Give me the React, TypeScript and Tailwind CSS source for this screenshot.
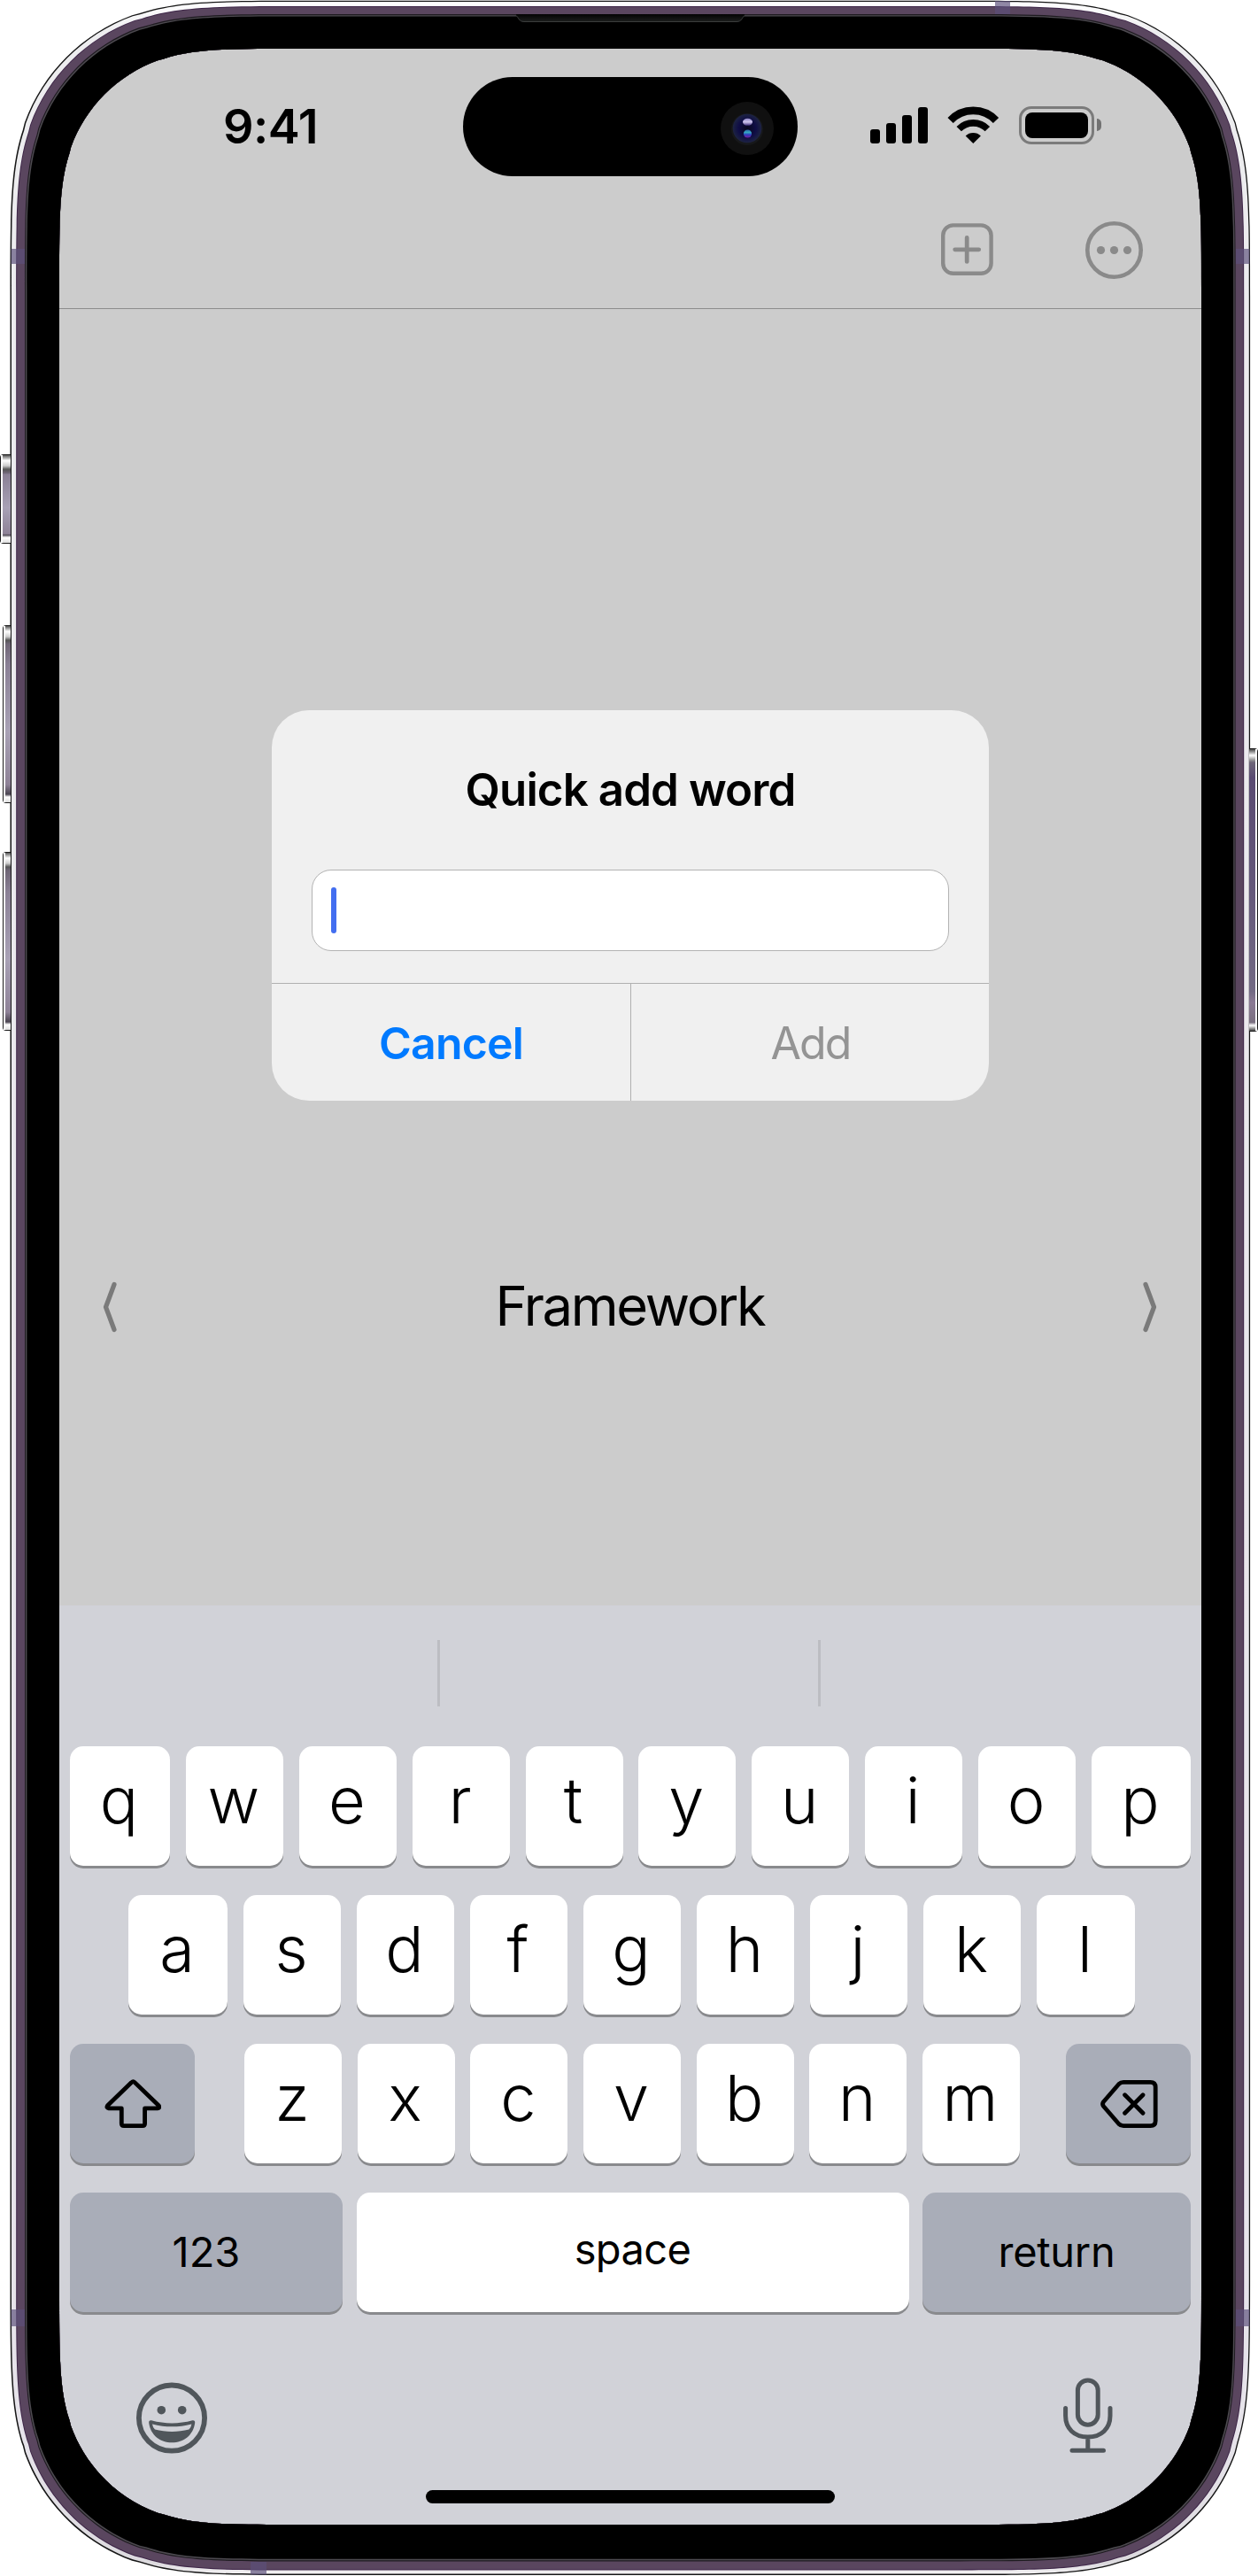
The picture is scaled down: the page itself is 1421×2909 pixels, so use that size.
import React from "react";

/** Rounded rectangle with continuous (smoothed) corners. */
function squircle(x: number, y: number, w: number, h: number, r: number) {
  const a = 1.52866483 * r, b = 1.08849323 * r, c = 0.86840694 * r, d = 0.66993427 * r, e = 0.065496 * r;
  const f = 0.63149399 * r, g = 0.07491139 * r, i = 0.37282392 * r, j = 0.16905956 * r;
  const R = x + w, B = y + h;
  return [
    `M${x + a} ${y}H${R - a}`,
    `C${R - b} ${y} ${R - c} ${y} ${R - d} ${y + e}L${R - f} ${y + g}`,
    `C${R - i} ${y + j} ${R - j} ${y + i} ${R - g} ${y + f}`,
    `L${R - e} ${y + d}C${R} ${y + c} ${R} ${y + b} ${R} ${y + a}V${B - a}`,
    `C${R} ${B - b} ${R} ${B - c} ${R - e} ${B - d}L${R - g} ${B - f}`,
    `C${R - j} ${B - i} ${R - i} ${B - j} ${R - f} ${B - g}`,
    `L${R - d} ${B - e}C${R - c} ${B} ${R - b} ${B} ${R - a} ${B}H${x + a}`,
    `C${x + b} ${B} ${x + c} ${B} ${x + d} ${B - e}L${x + f} ${B - g}`,
    `C${x + i} ${B - j} ${x + j} ${B - i} ${x + g} ${B - f}`,
    `L${x + e} ${B - d}C${x} ${B - c} ${x} ${B - b} ${x} ${B - a}V${y + a}`,
    `C${x} ${y + b} ${x} ${y + c} ${x + e} ${y + d}L${x + g} ${y + f}`,
    `C${x + j} ${y + i} ${x + i} ${y + j} ${x + f} ${y + g}`,
    `L${x + d} ${y + e}C${x + c} ${y} ${x + b} ${y} ${x + a} ${y}Z`,
  ].join("");
}

const HOLE = squircle(67, 55, 1290, 2796, 176);

function ring(x: number, y: number, w: number, h: number, r: number) {
  return squircle(x, y, w, h, r) + HOLE;
}

function Shell() {
  return (
    <svg className="pointer-events-none absolute inset-0" width="1421" height="2909" viewBox="0 0 1421 2909">
      <defs>
        <linearGradient id="rim" x1="0" y1="0" x2="0" y2="1">
          <stop offset="0" stopColor="#ffffff" />
          <stop offset="0.012" stopColor="#ededef" />
          <stop offset="0.95" stopColor="#e6e3ea" />
          <stop offset="0.996" stopColor="#dcdade" />
          <stop offset="1" stopColor="#f4f2f4" />
        </linearGradient>
        <linearGradient id="slot" x1="0" y1="0" x2="0" y2="1">
          <stop offset="0" stopColor="#030303" />
          <stop offset="1" stopColor="#1c1e1d" />
        </linearGradient>
      </defs>
      <path fillRule="evenodd" fill="#fff" d={"M0 0H1421V2909H0Z" + squircle(12, 1, 1400, 2907, 218)} />
      <path fillRule="evenodd" fill="#161616" d={ring(11.5, 0.8, 1400.6, 2907.2, 218)} />
      <path fillRule="evenodd" fill="url(#rim)" d={ring(13, 2, 1397.8, 2904.6, 217)} />
      <path fillRule="evenodd" fill="#3d2547" d={ring(18.2, 7, 1387, 2895.4, 212)} />
      <path fillRule="evenodd" fill="#5a465f" d={ring(19.2, 8, 1385, 2893.4, 211)} />
      <path fillRule="evenodd" fill="#1d1a1f" d={ring(28, 16, 1367.6, 2876.4, 204)} />
      <path fillRule="evenodd" fill="#4d4a50" d={ring(29, 17.2, 1365.6, 2874, 203)} />
      <path fillRule="evenodd" fill="#000" d={ring(30.4, 18.6, 1362.8, 2871.2, 202)} />
      <path d="M583 17.5C586 20 586 24.5 592 24.5H832C838 24.5 838 20 841 17.5V16H583Z" fill="url(#slot)" />
      <path d="M583 17.5C586 20 586 24.5 592 24.5H832C838 24.5 838 20 841 17.5" fill="none" stroke="#3a3c3c" />
      <g fill="#5b4f7a" fillOpacity="0.68">
        <path d="M12.5 281H28V298H12.5ZM1396 281H1411.5V298H1396Z" />
        <path d="M12.5 2608H28V2627H12.5ZM1396 2608H1411.5V2627H1396Z" />
        <path d="M1124 1H1141V16H1124ZM283 2893H301V2907.5H283Z" />
      </g>
    </svg>
  );
}

function SideButton({ className, side }: { className: string; side: "left" | "right" }) {
  const left = side === "left";
  return (
    <div
      className={
        "absolute border-[#1b1b1b] bg-white " +
        (left ? "rounded-l-[4px] border-y border-l " : "rounded-r-[4px] border-y border-r ") +
        className
      }
    >
      <div
        className={
          left
            ? "h-full w-full bg-[linear-gradient(180deg,#555_0,#fff_6px,#ccc_12px,#555_16px,#6f6676_20px,#8a8095_22%,#a8a1b5_60%,#8e8297_90%,#4a4450_calc(100%-9px),#fff_calc(100%-6px),#ddd_100%)]"
            : "h-full w-full bg-[linear-gradient(180deg,#444_0,#fff_7px,#999_12px,#6e6678_15px,#5a4b72_10%,#64587a_50%,#736a84_86%,#8b7a94_90%,#7a7080_97%,#fff_calc(100%-6px),#444_100%)]"
        }
      >
        <div className={"h-full w-[2px] bg-white " + (left ? "" : "ml-auto")} />
      </div>
    </div>
  );
}

function StatusBar() {
  return (
    <div className="flex h-[112px] items-center">
      <div className="flex w-[456px] justify-center pl-[21px]">
        <span className="text-[54px] leading-[60px] font-semibold tracking-[-0.4px]">9:41</span>
      </div>
      <div className="flex h-[112px] w-[378px] items-center justify-end rounded-full bg-black pt-1 pr-[27px]">
        <svg width="60" height="60" viewBox="0 0 60 60">
          <defs>
            <radialGradient id="lens">
              <stop offset="0" stopColor="#07071c" />
              <stop offset="0.6" stopColor="#0f0d45" />
              <stop offset="1" stopColor="#1d2342" />
            </radialGradient>
            <linearGradient id="glint" x1="0" y1="0" x2="0" y2="1">
              <stop offset="0" stopColor="#8f86c8" />
              <stop offset="0.5" stopColor="#cfc6ee" />
              <stop offset="1" stopColor="#3a2a78" />
            </linearGradient>
            <linearGradient id="glow" x1="0" y1="0" x2="0" y2="1">
              <stop offset="0" stopColor="#2a5fa8" />
              <stop offset="0.35" stopColor="#35a9c0" />
              <stop offset="0.6" stopColor="#2d3fc0" />
              <stop offset="1" stopColor="#7a1a9a" />
            </linearGradient>
          </defs>
          <circle cx="30" cy="30" r="30" fill="#101010" />
          <circle cx="30" cy="31" r="18" fill="#17181a" />
          <circle cx="30" cy="30" r="16.3" fill="url(#lens)" />
          <ellipse cx="30.5" cy="22.8" rx="5.5" ry="4" fill="url(#glint)" />
          <circle cx="30.5" cy="36" r="4.6" fill="url(#glow)" />
        </svg>
      </div>
      <div className="flex items-center gap-[23px] pb-1 pl-[82px]">
        <div className="flex h-[41px] items-end gap-[7px]">
          <div className="h-4 w-[11px] rounded-[3px] bg-black" />
          <div className="h-[23px] w-[11px] rounded-[3px] bg-black" />
          <div className="h-8 w-[11px] rounded-[3px] bg-black" />
          <div className="h-[41px] w-[11px] rounded-[3px] bg-black" />
        </div>
        <svg width="57" height="42" viewBox="1071 120 57 42" className="overflow-visible">
          <path d="M1073.6 136A35.3 35.3 0 0 1 1125 136" fill="none" stroke="#000" strokeWidth="8.6" />
          <path d="M1083.2 145.6A22.6 22.6 0 0 1 1115.4 145.6" fill="none" stroke="#000" strokeWidth="7.6" />
          <path d="M1090.7 153.4A12.4 12.4 0 0 1 1107.9 153.4L1099.3 162Z" fill="#000" />
        </svg>
        <div className="flex items-center gap-[3px]">
          <div className="h-[43px] w-[85px] rounded-[14px] border-[3px] border-[#7b7b7b] p-1">
            <div className="h-full w-full rounded-[8px] bg-black" />
          </div>
          <div className="h-[14px] w-[5px] rounded-r-full bg-[#727272]" />
        </div>
      </div>
    </div>
  );
}

function Toolbar() {
  return (
    <div className="flex items-center justify-end gap-[104px] pt-[51px] pr-[66px]">
      <svg width="59" height="65" viewBox="0 0 59 65" fill="none" stroke="#8a8a8a">
        <rect x="2.2" y="4.4" width="54.4" height="54.4" rx="11.5" strokeWidth="4.4" />
        <path d="M29.2 18.4V45.4M15.7 31.8H42.7" strokeWidth="4.8" strokeLinecap="round" />
      </svg>
      <svg width="65" height="65" viewBox="0 0 65 65">
        <circle cx="32.5" cy="32.5" r="30.2" fill="none" stroke="#8a8a8a" strokeWidth="4.6" />
        <g fill="#8a8a8a">
          <circle cx="17.5" cy="32.5" r="4.6" />
          <circle cx="32.5" cy="32.5" r="4.6" />
          <circle cx="47.5" cy="32.5" r="4.6" />
        </g>
      </svg>
    </div>
  );
}

function Chevron({ flip = false }: { flip?: boolean }) {
  return (
    <svg width="16" height="58" viewBox="0 0 16 58" className={flip ? "mt-[2px] -scale-x-100" : "mt-[2px]"}>
      <path d="M3 3.5L12.5 29L3 54.5" fill="none" stroke="#7a7a7a" strokeWidth="5.2" strokeLinecap="round" strokeLinejoin="round" />
    </svg>
  );
}

function QuickAddDialog() {
  return (
    <div className="absolute top-[747px] left-[240px] flex h-[441px] w-[810px] flex-col rounded-[42px] bg-[#f0f0f0]">
      <h2 className="mt-[60px] text-center text-[51px] leading-[60px] font-semibold tracking-[-0.9px]">Quick add word</h2>
      <div className="mx-[45px] mt-[60px] flex h-[92px] shrink-0 items-center rounded-[22px] border border-[#b3b3b3] bg-white pl-[21px]">
        <div className="h-[52px] w-[6px] rounded-full bg-[#436ef0]" />
      </div>
      <div className="mt-[36px] grid grow grid-cols-[406px_404px] border-t border-[#b0b0b0] text-[50px] leading-[60px]">
        <button className="border-r border-[#b0b0b0] pt-[1px] font-semibold tracking-[-0.8px] text-[#007aff]">Cancel</button>
        <button className="pt-[1px] pl-[1px] tracking-[-1.9px] text-[#949494]">Add</button>
      </div>
    </div>
  );
}

function Key({ label, className = "w-[110px]" }: { label: string; className?: string }) {
  return (
    <div className={"flex h-[135px] items-center justify-center rounded-[15px] bg-white pr-[2px] pb-[13px] text-[72px] leading-[80px] font-[340] shadow-[0_3px_0_#898a8d] " + className}>
      {label}
    </div>
  );
}

const GREY_KEY = "flex h-[135px] items-center justify-center rounded-[15px] bg-[#a9adb8] shadow-[0_3px_0_#898a8d] ";

function Keyboard() {
  return (
    <div className="flex h-[1038px] flex-col bg-[#d1d2d8] px-3">
      <div className="flex h-[159px] pt-[39px]">
        <div className="h-[75px] w-[418px] border-r-[3px] border-[#bcbdc2]" />
        <div className="h-[75px] w-[430px] border-r-[3px] border-[#bcbdc2]" />
      </div>
      <div className="flex flex-col gap-[33px]">
        <div className="flex justify-between">
          <Key label="q" className="w-[113px]" />
          {"wertyuio".split("").map((k) => <Key key={k} label={k} />)}
          <Key label="p" className="w-[112px]" />
        </div>
        <div className="flex justify-between pr-[63px] pl-[66px]">
          <Key label="a" className="w-[112px]" />
          {"sdfghjk".split("").map((k) => <Key key={k} label={k} />)}
          <Key label="l" className="w-[111px]" />
        </div>
        <div className="flex justify-between">
          <div className={GREY_KEY + "w-[141px]"}>
            <svg width="64" height="56" viewBox="118 2349 64 56" fill="none" stroke="#000" strokeWidth="4.8" strokeLinejoin="round">
              <path d="M148.6 2352.6Q150.4 2350.8 152.2 2352.6L179.3 2378.8Q181 2381.5 178 2381.8H163.6V2399Q163.6 2401.6 161 2401.6H140Q137.3 2401.6 137.3 2399V2381.8H122.8Q119.8 2381.5 121.5 2378.8Z" />
            </svg>
          </div>
          <div className="ml-1 flex w-[876px] justify-between">
            {"zxcvbnm".split("").map((k) => <Key key={k} label={k} />)}
          </div>
          <div className={GREY_KEY + "w-[141px]"}>
            <svg width="66" height="56" viewBox="1242 2349 66 56" fill="none" stroke="#000" strokeWidth="4.8" strokeLinejoin="round" strokeLinecap="round">
              <path d="M1269 2352.3H1299.5Q1305.2 2352.3 1305.2 2358V2396Q1305.2 2401.7 1299.5 2401.7H1269Q1266 2401.7 1263.8 2399.5L1246.5 2379.5Q1244.6 2377 1246.5 2374.5L1263.8 2354.5Q1266 2352.3 1269 2352.3Z" />
              <path d="M1270.6 2366.8L1291 2387.3M1291 2366.8L1270.6 2387.3" />
            </svg>
          </div>
        </div>
        <div className="flex justify-between text-[47px] leading-[60px]">
          <div className={GREY_KEY + "w-[308px] pb-[2px]"}>123</div>
          <div className="flex h-[135px] w-[624px] items-center justify-center rounded-[15px] bg-white pb-[7px] tracking-[-0.6px] shadow-[0_3px_0_#898a8d]">space</div>
          <div className={GREY_KEY + "w-[303px] pb-[2px] tracking-[-0.3px]"}>return</div>
        </div>
      </div>
      <div className="flex justify-between pt-[74px] pr-[88px] pl-[75px]">
        <svg width="80" height="90" viewBox="154 2685 80 90">
          <circle cx="194" cy="2730.6" r="37.1" fill="none" stroke="#50565b" strokeWidth="5.8" />
          <circle cx="182.3" cy="2721.7" r="4.8" fill="#50565b" />
          <circle cx="205.7" cy="2721.7" r="4.8" fill="#50565b" />
          <path d="M171 2733.3Q168 2732.8 168.2 2736C170 2750 181 2758.3 194.2 2758.3C207.5 2758.3 218.4 2750 220.2 2736Q220.4 2732.8 217.4 2733.3C202 2737.5 186.5 2737.5 171 2733.3Z" fill="#50565b" />
          <path d="M172 2737.5C187 2741.3 201.5 2741.3 216.4 2737.5Q215.8 2741.5 213.5 2743.6C201 2746.7 187.4 2746.7 175 2743.6Q172.6 2741.5 172 2737.5Z" fill="#d1d2d8" />
        </svg>
        <svg width="56" height="90" viewBox="1201 2685 56 90" fill="none" stroke="#50565b" strokeWidth="5" strokeLinecap="round">
          <rect x="1217.4" y="2688" width="22.8" height="50.2" rx="11.4" />
          <path d="M1203.6 2719.5V2728C1203.6 2742.5 1213.5 2752 1228.8 2752S1254 2742.5 1254 2728V2719.5M1228.8 2752V2767M1211 2767.3H1246.5" />
        </svg>
      </div>
      <div className="mx-auto mt-[37px] h-[15px] w-[462px] rounded-full bg-black" />
    </div>
  );
}

export default function App() {
  return (
    <div className="relative flex h-[2909px] w-[1421px] flex-col bg-white pt-[55px] pl-[67px] font-['Inter',sans-serif] text-black">
      <div className="relative flex h-[2796px] w-[1290px] flex-col bg-[#cccccc]">
        <header className="h-[294px] border-b border-[#8c8c8c] pt-8">
          <StatusBar />
          <Toolbar />
        </header>
        <main className="flex h-[1464px] items-start justify-between pt-[1096px] pr-[50px] pl-[49px]">
          <Chevron flip />
          <span className="text-[61.5px] leading-[60px] tracking-[-2.3px]">Framework</span>
          <Chevron />
        </main>
        <Keyboard />
        <QuickAddDialog />
      </div>
      <Shell />
      <SideButton side="left" className="top-[513px] left-0 h-[101px] w-[12px]" />
      <SideButton side="left" className="top-[706px] left-[3px] h-[201px] w-[9px]" />
      <SideButton side="left" className="top-[962px] left-[3px] h-[202px] w-[9px]" />
      <SideButton side="right" className="top-[845px] left-[1411px] h-[320px] w-[10px]" />
    </div>
  );
}
